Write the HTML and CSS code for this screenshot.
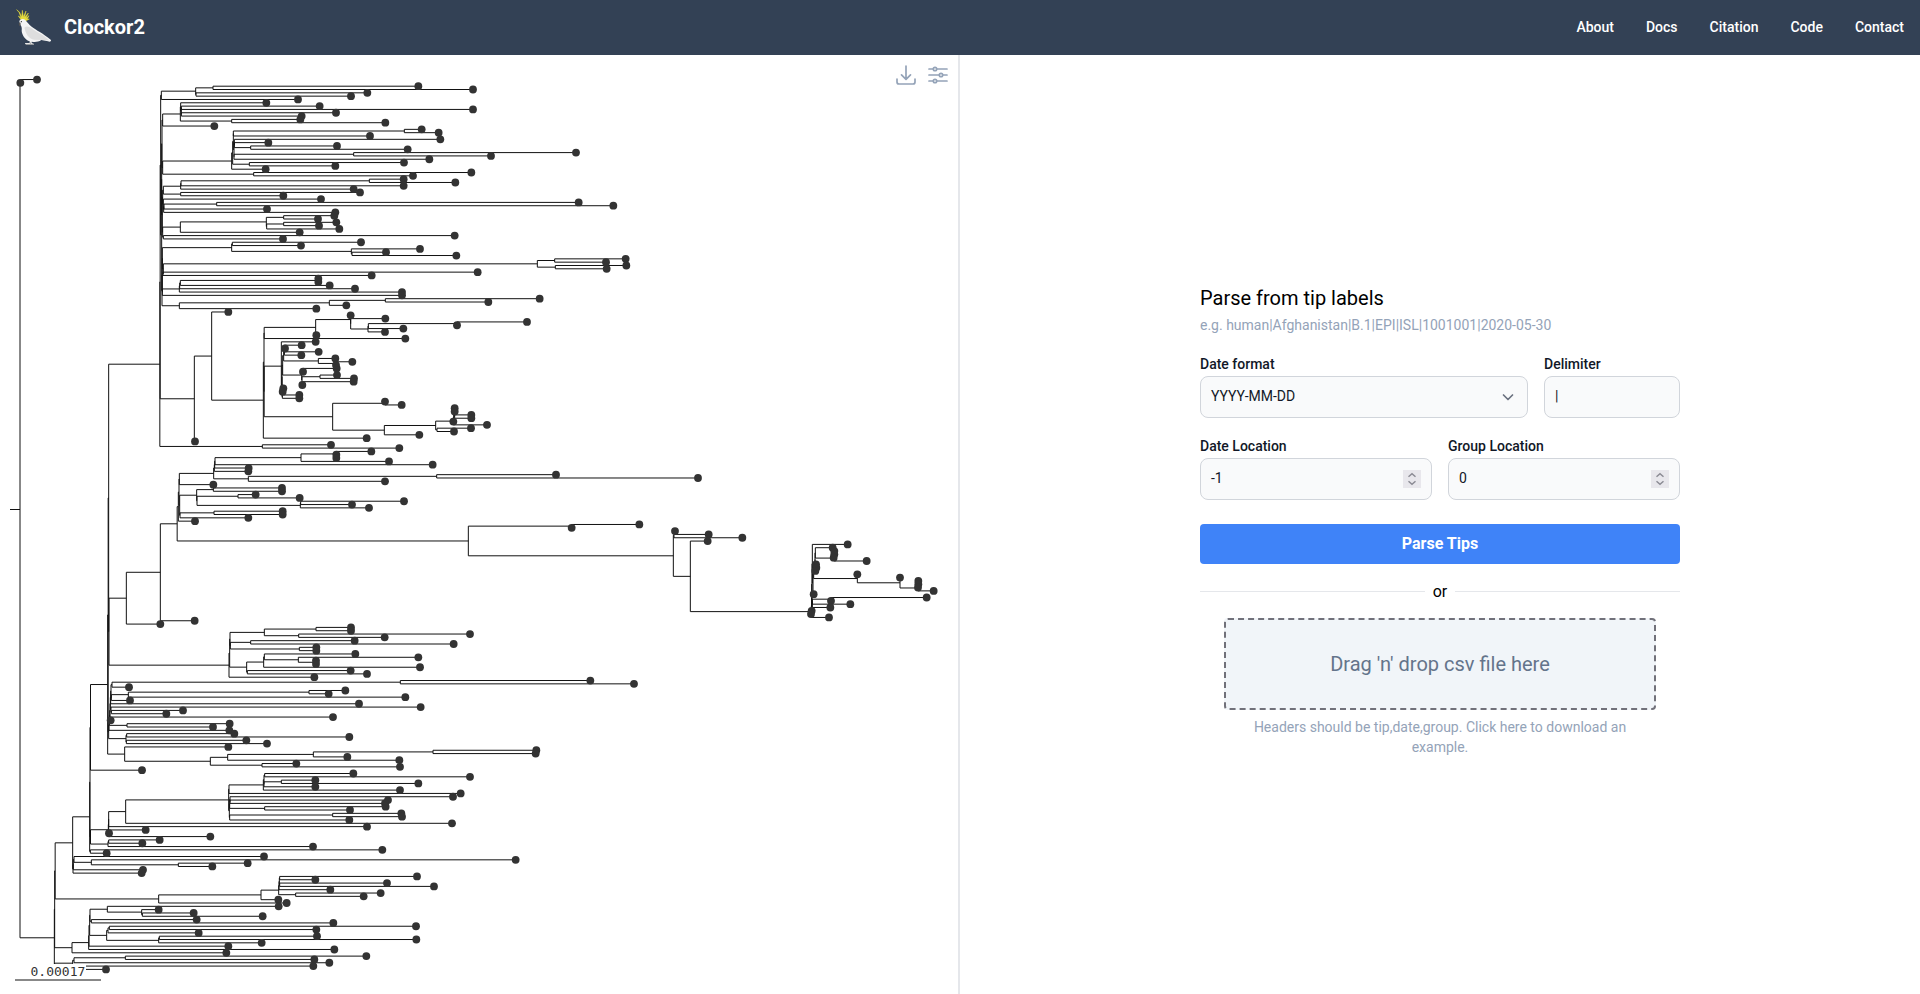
FILE: index.html
```html
<!DOCTYPE html>
<html lang="en">
<head>
<meta charset="utf-8">
<title>Clockor2</title>
<link rel="stylesheet" href="styles.css">
</head>
<body>
<header class="topbar">
  <div class="brand">
    <svg class="logo" viewBox="3 -2 120 120" aria-hidden="true">
      <path class="crest" d="M20 39 L10 25 L18 30 L12 14 L5 6 L14 14 L20 28 L22 8 L25 27 L33 10 L29 29 L40 16 L33 32 L42 24 L37 34 L43 34 L30 41Z"/>
      <path class="bird" d="M13 40 C15 34 25 31 31 37 C37 44 41 50 50 57 C64 68 82 75 108 97 C109 101 104 104 99 101 L79 97 C70 103 60 104 50 102 L50 106 L57 109 L30 109 L31 106 L44 106 L44 101 C31 97 21 82 20 70 C21 60 20 55 14 50Z"/>
      <path class="wing" d="M28 60 C32 76 40 93 58 96 L102 98 C82 78 62 73 50 62 C42 56 34 54 28 60Z"/>
      <path class="beak" d="M15 44 C10 45 10 51 14 56 C18 52 18 48 15 44Z"/>
      <circle class="eye" cx="19" cy="42" r="1.8"/>
      <path class="feet" d="M32 110H57M46 104V109"/>
    </svg>
    <span class="name">Clockor2</span>
  </div>
  <nav class="nav"><a>About</a><a>Docs</a><a>Citation</a><a>Code</a><a>Contact</a></nav>
</header>
<main class="split">
  <section class="tree-panel">
    <svg class="tree" id="tree" width="958" height="939" viewBox="0 55 958 939"></svg>
    <div class="tools">
      <svg width="20" height="20" viewBox="0 0 20 20"><path d="M10 1V14M5.5 9.8 10 14.3 14.500 9.800M1 14V17Q1 19 3 19H17Q19 19 19 17V14"/></svg>
      <svg width="20" height="20" viewBox="0 0 20 20"><path d="M1 4H5M9 4H19M1 10H11M15 10H19M1 16H5M9 16H19"/><circle cx="7" cy="4" r="1.700"/><circle cx="13" cy="10" r="1.700"/><circle cx="7" cy="16" r="1.700"/></svg>
    </div>
  </section>
  <section class="form-panel">
    <div class="form">
      <h1 class="title">Parse from tip labels</h1>
      <p class="hint">e.g. human|Afghanistan|B.1|EPI|ISL|1001001|2020-05-30</p>
      <div class="row">
        <div class="field wide"><label class="label">Date format</label>
          <div class="control"><span>YYYY-MM-DD</span><svg class="caret" width="12" height="12" viewBox="0 0 12 12"><path d="M1.500 4 6 8.500 10.500 4"/></svg></div></div>
        <div class="field narrow"><label class="label">Delimiter</label><div class="control"><span>|</span></div></div>
      </div>
      <div class="row second">
        <div class="field"><label class="label">Date Location</label>
          <div class="control"><span>-1</span><svg class="spin" width="18" height="18" viewBox="0 0 18 18"><path d="M5.500 6.800 9 3.800 12.500 6.800M5.500 11.200 9 14.200 12.500 11.200"/></svg></div></div>
        <div class="field"><label class="label">Group Location</label>
          <div class="control"><span>0</span><svg class="spin" width="18" height="18" viewBox="0 0 18 18"><path d="M5.500 6.800 9 3.800 12.500 6.800M5.500 11.200 9 14.200 12.500 11.200"/></svg></div></div>
      </div>
      <button class="submit">Parse Tips</button>
      <div class="divider"><span>or</span></div>
      <div class="drop">Drag 'n' drop csv file here</div>
      <p class="note">Headers should be tip,date,group. Click here to download an example.</p>
    </div>
  </section>
</main>
<script src="tree.js"></script>
</body>
</html>
```
FILE: styles.css
```css
* { box-sizing: border-box; }
body { margin: 0; height: 994px; overflow: hidden; display: flex; flex-direction: column; font-family: Roboto, "Liberation Sans", sans-serif; background: #fff; color: #000; }
.topbar { height: 55px; flex: none; background: #334155; color: #fff; display: flex; align-items: center; justify-content: space-between; padding: 0 16px 1px; }
.brand { display: flex; align-items: center; gap: 8px; }
.logo { width: 40px; height: 40px; }
.crest { fill: #e6dc3c; stroke: #e6dc3c; stroke-width: 1.5; }
.bird { fill: #f4f4f4; }
.wing { fill: #dedede; }
.beak { fill: #555; }
.eye { fill: #222; }
.feet { fill: none; stroke: #aaa; stroke-width: 3; }
.name { font-size: 20px; font-weight: 700; line-height: 28px; }
.nav { display: flex; gap: 32px; font-size: 14px; font-weight: 500; line-height: 20px; }
.split { flex: 1; display: flex; min-height: 0; }
.tree-panel { width: 960px; flex: none; border-right: 2px solid #e5e7eb; display: grid; }
.tree { grid-area: 1 / 1; display: block; }
.tools { grid-area: 1 / 1; justify-self: end; align-self: start; display: flex; gap: 12px; padding: 10px 10px 0 0; }
.tools svg { fill: none; stroke: #94a3b8; stroke-width: 1.7; stroke-linecap: round; stroke-linejoin: round; }
.branch { fill: none; stroke: #111; stroke-width: 1; }
.tip { fill: #333; }
.scale-bg { fill: #fff; }
.scale-label { font: 13px "DejaVu Sans Mono", monospace; fill: #333; }
.scale-line { stroke: #888; stroke-width: 2; }
.form-panel { flex: 1; display: flex; justify-content: center; padding-top: 229px; }
.form { width: 480px; }
.title { margin: 0; font-size: 20px; font-weight: 400; line-height: 28px; }
.hint { margin: 3px 0 19px; font-size: 14px; line-height: 20px; color: #94a3b8; }
.row { display: flex; gap: 16px; }
.second { margin-top: 18px; }
.field { flex: 1; }
.wide { flex: 0 0 328px; }
.label { display: block; font-size: 14px; font-weight: 500; line-height: 20px; margin-bottom: 2px; color: #111827; }
.control { height: 42px; border: 1px solid #d1d5db; border-radius: 8px; background: #f9fafb; padding: 0 10px; display: flex; align-items: center; justify-content: space-between; font-size: 14px; color: #111827; }
.control span { position: relative; top: -1px; }
.caret { margin-right: 3px; fill: none; stroke: #6b7280; stroke-width: 1.7; stroke-linecap: round; stroke-linejoin: round; }
.spin { background: #e8e7ec; fill: none; stroke: #8b8b94; stroke-width: 1.5; }
.submit { display: block; width: 100%; height: 40px; margin-top: 24px; border: 0; border-radius: 4px; background: #3f83f8; color: #fff; font: 700 16px/24px Roboto, sans-serif; padding: 0; }
.divider { display: flex; align-items: center; gap: 8px; height: 24px; margin-top: 15px; font-size: 16px; }
.divider::before, .divider::after { content: ""; flex: 1; height: 1px; background: #e5e7eb; }
.drop { height: 92px; margin: 15px 24px 0; border: 2px dashed #71717a; border-radius: 4px; background: #f1f5f9; display: flex; align-items: center; justify-content: center; font-size: 20px; color: #64748b; }
.note { margin: 7px 48px 0; font-size: 14px; line-height: 20px; color: #94a3b8; text-align: center; }
```
FILE: tree.js
```js
// A clade is [x, child, child]; a bare number is a tip.
// x is counted in thirds of a pixel from the clade's own origin.
function clade(origin, node) {
  if (typeof node === 'number') return { x: (node + origin) / 3, kids: [] };
  if (!Array.isArray(node)) return node;
  return { x: (node[0] + origin) / 3, kids: node.slice(1).map(function (k) { return clade(origin, k); }) };
}

// Upper clade
var u1 = [64, [167, [219, 835, 999], [168, 682, 633]], 474];
var u2 = [121, [122, 379, [124, [124, 539, 999], [124, 588, 485]]], [275, 481, 736]];
var u3a = [280, [280, [793, 845, 896], 690], [282, [283, 901, [283, 385, [332, 591, 803]]], [282, [641, 1308, 1053], 868]]];
var u3 = [275, [278, u3a, [328, 792, 586]], 377];
var u4 = [66, [68, u2, 223], [68, u3, [341, 994, 819]]];
var u5 = [70, [122, [123, [688, 791, 946], 791], 641], [122, 660, 430]];
var u6 = [70, 543, [71, [72, [230, 1316, 1420], 381], 586]];
var u7 = [121, [379, [431, 583, 534], [380, [431, 589, 537], 598]], 479];
var u8 = [67, [68, u5, u6], [68, u7, [70, 944, 429]]];
var u9 = [67, [275, [277, 663, 483], [634, 840, [636, 738, 949]]], [70, [1192, [1244, 1457, 1398], [1246, 1459, 1400]], [69, 1013, 695]]];
var u10 = [67, [118, [119, [121, [535, 535, 535], 569], 645], 786], 786];
var u11 = [118, [568, [736, 1199, 1045], 619], 529];
var u12 = [65, [65, u4, u8], [66, [67, u9, u10], u11]];

var v1 = [632, 632, [632, 736, [684, [685, [951, 1161, 951], 790], 735]]];
var v2 = [431, [433, [433, 485, 435], [433, 536, 484]], [535, 586, [586, 637, 588]]];
var v3 = [485, [489, 590, 489], [486, [540, 591, 642], [487, 641, 487]]];
var v4 = [424, 527, [426, [426, [426, [428, v2, v3], 430], 428], [427, 478, 478]]];
var v5 = [940, [941, [943, [944, 944, 944], [944, 994, 994]], 940], 1041];
var v6 = [578, [735, 735, 785], [733, [887, v5, [891, 993, 942]], 838]];
var v7 = [370, [372, [372.5, [527, v1, 529], 796], [372.5, v4, v6]], 680];
var v8 = [163, [215, 265, v7], 165];
var upper = clade(420, [59.5, [60.5, [62, u1, u12], v8], [367, 573, 778]]);

// Far right clade
var r1 = [526, 578, [581, [582, [583, 583, 583], 581], 680]];
var r2 = [525, [525, r1, [528, 528, 529]], 526];
var r3 = [652, 652, [780, 780, [834, [835, [835, 835, 835], 834], 881]]];
var r4 = [517, 623, [519, [521, r2, r3], 521]];
var r5 = [517, [517, [573, 860, 573], 631], 571];
var r6 = [514, [515, [515, [516, r4, r5], 515], 513], 567];
var right = clade(1920, [100, [102, [104, 105, 206], 307], [151, 203, r6]]);

// Middle clade
var m1 = [603, [709, 814, [709, 709, 709]], 867];
var m2 = [341, [343, [344, [345, m1, 998], 446], 445], [445, [1010, 1368, 1794], 855]];
var m3 = [290, [340, 546, 546], [291, [414, 467, 599], [601, [602, 912, 756], 807]]];
var m4 = [240, [342, 548, 548], 445];
var m5 = [235, [237, [238, m2, 340], [239, m3, m4]], 285];
var m6 = [231.5, m5, [1105, [1415, 1618, 1415], right]];
var middle = clade(300, [79, [181, m6, 284], 181]);

// Lower clades
var a1 = [450, [553, [708, 813, 813], [656, 1170, 914]], [451, [512, 824, 1121], [658, 709, 709]]];
var a2 = [500, [551, [553, 826, [655, 1015, [708, 708, 708]]], 1020], [502, 812, 861]];
var a3 = [447, [449, a1, a2], 703];
var b1 = [93, [96, [961, 1531, 1662], 147], [94, [145, [687, 796, 746], 976], 150]];
var b2 = [91, [92, b1, 837], [93, 1022, [94, 309, 259]]];
var b3 = [88, [89, [90, b2, 759], 92], [141, 449, 399]];
var b4 = [86, [87, b3, 448], [138, [140, 463, 808], [139, 499, 561]]];
var c1 = [391, [443, [700, [1059, 1369, 1367], 802], 958], [546, 649, 960]];
var lower = clade(240, [31.5, [83, [84.5, [86, upper, [87, middle, a3]], b4], [134, 445, c1]], 186]);

var d1 = [670, [672, [674, 940, 1290], [672, [724, 826, 1135], 826]], 1080];
var d2 = [568, [569, [570, 1239, [570, 1044, 1035]], [674, 1037, 930]], [569, [878, 1084, 1086], 928]];
var d3 = [257, [566, [567, d1, 1262], d2], 1236];
var d4 = [205, [206, [206, d3, 981], 317], [207, 207, 511]];
var d5 = [149, [150, lower, [151.5, d4, [204, [206, 359, 307], 819]]], [151, 1027, 200]];
var d6 = [99, [100, [102, 672, [154, 1427, [415, 623, 517]]], 309], 305];
var base = clade(120, [98, d5, d6]);

// Bottom clades and the root
var e1 = [836, [837, [838, [839, 1251, 946], [839, 1161, 1302]], 991], [887, 1142, 1091]];
var e2 = [476, [783, e1, 835], 860];
var f1 = [270, [322, 836, [425, 476, [427, 581, 788]]], [274, 590, 1000]];
var f2 = [320, [324, [328, 1248, 949], 596], [476, [478, 951, 1249], 785]];
var f3 = [216, [266, [267, [269, f1, f2], 685], 1003], 679];
var g1 = [164, [218, [222, [376, 1099, 943], 988], 940], 318];
var root = clade(0, [60, [61, 111, 61], [163, [164, [165.5, base, e2], f3], g1]]);

var FIRST_Y = 79.55, LAST_Y = 969.4;
var tips = [];
(function collect(n) { if (n.kids.length) n.kids.forEach(collect); else tips.push(n); })(root);
tips.forEach(function (t, i) { t.y = FIRST_Y + i * (LAST_Y - FIRST_Y) / (tips.length - 1); });

var path = '';
(function layout(n) {
  if (!n.kids.length) return;
  n.kids.forEach(layout);
  var top = n.kids[0].y, bottom = n.kids[n.kids.length - 1].y;
  n.y = (top + bottom) / 2;
  path += 'M' + n.x + ' ' + top + 'V' + bottom;
  n.kids.forEach(function (k) { path += 'M' + n.x + ' ' + k.y + 'H' + k.x; });
})(root);
path += 'M10 ' + root.y + 'H' + root.x;

document.getElementById('tree').innerHTML =
  '<path class="branch" d="' + path + '"/>' +
  tips.map(function (t) { return '<circle class="tip" cx="' + t.x + '" cy="' + t.y + '" r="3.9"/>'; }).join('') +
  '<rect class="scale-bg" x="31" y="964" width="55" height="13"/>' +
  '<text class="scale-label" x="30.500" y="976">0.00017</text>' +
  '<path class="scale-line" d="M15 980H101"/>';
```
